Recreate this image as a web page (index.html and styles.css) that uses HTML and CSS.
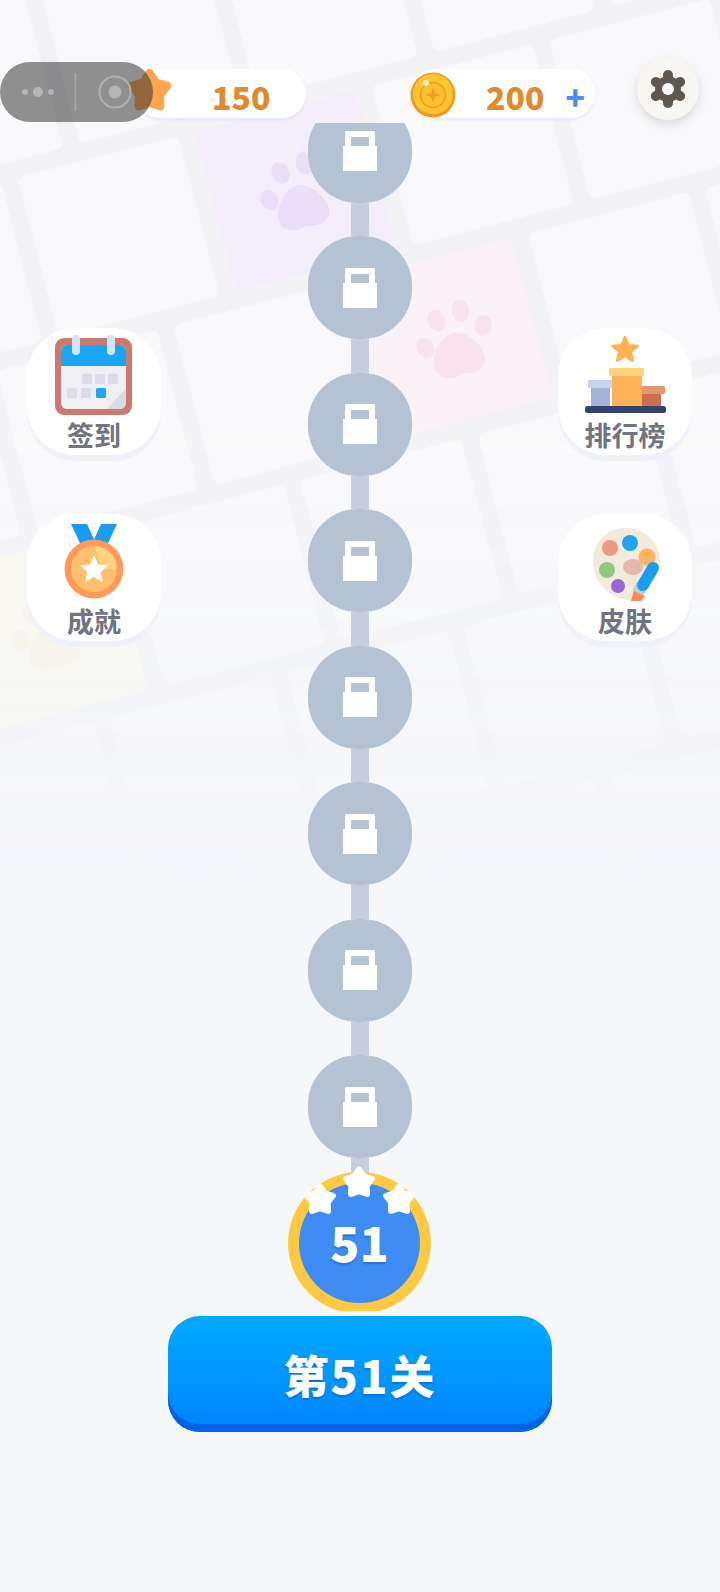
FILE: index.html
```html
<html>
<head>
<title>第51关</title>
<link rel="stylesheet" href="styles.css">
</head>
<body>
<svg class="defs" width="0" height="0">
  <symbol id="star" viewBox="-12 -12 24 24">
    <polygon points="0,-9 3.2,-4.4 8.6,-2.8 5.2,1.700 5.300,7.300 0,5.500 -5.300,7.300 -5.200,1.700 -8.600,-2.800 -3.200,-4.400" stroke-width="4" stroke-linejoin="round"/>
  </symbol>
  <symbol id="paw" viewBox="0 0 80 80">
    <ellipse cx="11" cy="39" rx="8.5" ry="10.500" transform="rotate(-15 11 39)"/>
    <ellipse cx="28" cy="16" rx="8.5" ry="11" transform="rotate(-8 28 16)"/>
    <ellipse cx="53" cy="13" rx="8.5" ry="11" transform="rotate(6 53 13)"/>
    <ellipse cx="71" cy="32" rx="8.5" ry="10.500" transform="rotate(18 71 32)"/>
    <path d="M40 32c12 0 25 15 25 29 0 12-14 16-25 11-11 5-25 1-25-11 0-14 13-29 25-29z"/>
  </symbol>
</svg>

<div class="page">
  <div class="bg">
    <div class="tiles">
      <div class="row row0"><i></i><i></i><i></i><i></i><i></i><i></i></div>
      <div class="row row1"><i></i><i></i><i class="purple"><svg><use href="#paw"/></svg></i><i></i><i></i><i></i></div>
      <div class="row row2"><i></i><i></i><i></i><i class="pink"><svg><use href="#paw"/></svg></i><i></i><i></i></div>
      <div class="row row3"><i></i><i class="yellow"><svg><use href="#paw"/></svg></i><i></i><i></i><i></i><i></i></div>
      <div class="row row4"><i></i><i></i><i></i><i></i><i></i><i></i></div>
      <div class="row row5"><i></i><i></i><i></i><i></i><i></i><i></i></div>
    </div>
  </div>

  <div class="topbar">
    <div class="stat stat-star">
      <svg class="stat-icon star-icon"><use href="#star" fill="#ffa54f" stroke="#ffa54f"/></svg>
      <span class="num">150</span>
    </div>
    <div class="stat stat-coin">
      <svg class="stat-icon coin-icon" viewBox="0 0 46 46">
        <circle cx="23" cy="23" r="22.5" fill="#ee9a1e"/>
        <circle cx="23" cy="22" r="20" fill="#ffc531"/>
        <circle cx="23" cy="23" r="12.5" fill="#fcc02f" stroke="#ec9f22" stroke-width="1.5"/>
        <path d="M23 15.500l2 5.500 5.500 2-5.500 2-2 5.500-2-5.500-5.500-2 5.500-2z" fill="#ec9f22"/>
        <circle cx="16" cy="11" r="3" fill="#fff2c4"/>
      </svg>
      <span class="num">200</span>
      <span class="plus">+</span>
    </div>
    <div class="gear">
      <svg viewBox="0 0 38 38" width="38" height="38">
        <g stroke="#5e5850" stroke-width="10" stroke-linecap="round">
          <line x1="19" y1="5" x2="19" y2="33"/>
          <line x1="19" y1="5" x2="19" y2="33" transform="rotate(60 19 19)"/>
          <line x1="19" y1="5" x2="19" y2="33" transform="rotate(120 19 19)"/>
        </g>
        <circle cx="19" cy="19" r="13" fill="#5e5850"/>
        <circle cx="19" cy="19" r="6" fill="#f8f7f4"/>
      </svg>
    </div>
  </div>

  <div class="capsule">
    <svg viewBox="0 0 153 60" width="153" height="60">
      <g fill="#b4b4b4">
        <circle cx="25" cy="30" r="3"/>
        <circle cx="38" cy="30" r="5"/>
        <circle cx="51" cy="30" r="3"/>
        <circle cx="115" cy="30" r="6.500"/>
      </g>
      <line x1="75.500" y1="11" x2="75.500" y2="49" stroke="#a8a8a8" stroke-width="1.500"/>
      <circle cx="115" cy="30" r="15.500" fill="none" stroke="#b0b0b0" stroke-width="2"/>
    </svg>
  </div>

  <div class="map">
    <div class="side">
      <div class="card">
        <svg class="card-icon" viewBox="0 0 80 82">
          <rect x="1" y="3" width="77" height="77" rx="9" fill="#cc7a6f"/>
          <rect x="7" y="10" width="65" height="64" rx="6" fill="#f0f0f4"/>
          <path d="M7 31V16a6 6 0 0 1 6-6h53a6 6 0 0 1 6 6v15z" fill="#18a6f5"/>
          <path d="M72 53v15a6 6 0 0 1-6 6H53z" fill="#d9dce3"/>
          <g fill="#dcdce8">
            <rect x="28" y="39" width="10" height="10" rx="1.500"/>
            <rect x="41" y="39" width="10" height="10" rx="1.500"/>
            <rect x="54" y="39" width="10" height="10" rx="1.500"/>
            <rect x="13" y="53" width="10" height="10" rx="1.500"/>
            <rect x="27" y="53" width="10" height="10" rx="1.500"/>
          </g>
          <rect x="42" y="53" width="10" height="10" rx="1.500" fill="#18a6f5"/>
          <g fill="none" stroke="#d4e3f8" stroke-width="8" stroke-linecap="round">
            <line x1="22" y1="4" x2="22" y2="16"/>
            <line x1="57" y1="4" x2="57" y2="16"/>
          </g>
        </svg>
        <span class="label">签到</span>
      </div>
      <div class="card">
        <svg class="card-icon" viewBox="0 0 80 82">
          <path d="M17 3h16l10 22-12 8z" fill="#1a9cf0"/>
          <path d="M63 3H47L37 25l12 8z" fill="#1a9cf0"/>
          <circle cx="40" cy="48" r="29.500" fill="#ff9a5b"/>
          <circle cx="40" cy="48" r="23" fill="#ffbf6f"/>
          <path d="M40 25a23 23 0 0 1 23 23H48z" fill="#ffd27f"/>
          <polygon points="40,35 43.900,44 53.300,44.700 46.200,50.900 48.200,60.300 40,55.400 31.800,60.300 33.800,50.900 26.700,44.700 36.100,44" fill="#fff" stroke="#fff" stroke-width="1" stroke-linejoin="round"/>
        </svg>
        <span class="label">成就</span>
      </div>
    </div>

    <div class="chain">
      <div class="node"><span class="lock"></span></div>
      <div class="link"></div>
      <div class="node"><span class="lock"></span></div>
      <div class="link"></div>
      <div class="node"><span class="lock"></span></div>
      <div class="link"></div>
      <div class="node"><span class="lock"></span></div>
      <div class="link"></div>
      <div class="node"><span class="lock"></span></div>
      <div class="link"></div>
      <div class="node"><span class="lock"></span></div>
      <div class="link"></div>
      <div class="node"><span class="lock"></span></div>
      <div class="link"></div>
      <div class="node"><span class="lock"></span></div>
      <div class="link link-last"></div>
      <div class="level">
        <span class="level-num">51</span>
        <svg class="level-star s1"><use href="#star" fill="#fff" stroke="#fff"/></svg>
        <svg class="level-star s2"><use href="#star" fill="#fff" stroke="#fff"/></svg>
        <svg class="level-star s3"><use href="#star" fill="#fff" stroke="#fff"/></svg>
      </div>
    </div>

    <div class="side">
      <div class="card">
        <svg class="card-icon" viewBox="0 0 84 82">
          <polygon points="42,2 45.500,10.300 54.500,11 47.700,16.800 49.800,25.600 42,21 34.200,25.600 36.300,16.800 29.500,11 38.500,10.300" fill="#ffb24f" stroke="#ffb24f" stroke-width="2.500" stroke-linejoin="round"/>
          <rect x="8" y="53" width="19" height="18" fill="#a5b1d6"/>
          <rect x="5" y="45" width="24" height="8" rx="1.500" fill="#c5d3ef"/>
          <rect x="58" y="59" width="20" height="12" fill="#cc6f4c"/>
          <rect x="58" y="51" width="24" height="8" rx="1.500" fill="#e59870"/>
          <rect x="29" y="41" width="30" height="30" fill="#ffb25a"/>
          <rect x="26" y="33" width="35" height="8" rx="1.500" fill="#ffd27a"/>
          <rect x="2" y="71" width="81" height="7" rx="2.500" fill="#33436b"/>
        </svg>
        <span class="label">排行榜</span>
      </div>
      <div class="card">
        <svg class="card-icon" viewBox="0 0 80 82">
          <path d="M41 7c19 0 34 14 34 33 0 9-5 13-10 18-6 6-8 21-19 21C24 79 8 60 8 40 8 20 22 7 41 7z" fill="#f3eadc"/>
          <circle cx="25" cy="27" r="8" fill="#e89a82"/>
          <circle cx="45" cy="22" r="8" fill="#18a6f5"/>
          <circle cx="62" cy="36" r="8.500" fill="#ffb35e"/>
          <circle cx="22" cy="49" r="8" fill="#92c87e"/>
          <ellipse cx="48" cy="46" rx="10" ry="8" fill="#e6b8aa"/>
          <circle cx="33" cy="65" r="7" fill="#9268d6"/>
          <path d="M46 80l3-11 11 6-4 5z" fill="#ff8a57"/>
          <line x1="57" y1="64" x2="53" y2="72" stroke="#c2cbd4" stroke-width="12"/>
          <line x1="68" y1="47" x2="58" y2="64" stroke="#1a9cf0" stroke-width="12" stroke-linecap="round"/>
        </svg>
        <span class="label">皮肤</span>
      </div>
    </div>
  </div>

  <div class="start">第51关</div>
</div>
</body>
</html>
```

FILE: styles.css
```css
body {
    margin: 0;
    background: #f6f7fb;
    font-family: "Noto Sans CJK SC", "Noto Sans", sans-serif;
}
.defs {
    display: block;
    height: 0;
}
.page {
    position: relative;
    width: 720px;
    height: 1592px;
    overflow: hidden;
}

/* tilted tile floor behind everything */
.bg {
    position: absolute;
    left: 0;
    top: 0;
    width: 720px;
    height: 1000px;
    overflow: hidden;
    background: #f3f3f6;
    -webkit-mask-image: linear-gradient(#000 40%, transparent 90%);
    mask-image: linear-gradient(#000 40%, transparent 90%);
}
.tiles {
    width: 1200px;
    height: 1300px;
    transform-origin: 0 0;
    transform: rotate(-14.5deg);
}
.row {
    display: flex;
    gap: 17px;
    margin-bottom: 17px;
}
.row:first-child {
    margin-top: -6px;
}
.row i {
    display: flex;
    flex: none;
    align-items: center;
    justify-content: center;
    width: 166px;
    height: 165px;
    border-radius: 6px;
    background: #f9f9fb;
}
.row i svg {
    width: 82px;
    height: 82px;
    margin: 6px 0 0 4px;
}
.row0 { margin-left: -143px; }
.row1 { margin-left: -212px; }
.row2 { margin-left: -281px; }
.row3 { margin-left: -380px; }
.row4 { margin-left: -258px; }
.row5 { margin-left: -336px; }
.row i.purple { background: #f4eefb; fill: #e9e0f8; }
.row i.pink { background: #fbf2f7; fill: #f8e4ee; }
.row i.yellow { background: #fbf9ec; fill: #f8f3de; }

/* top bar */
.topbar {
    position: relative;
    display: flex;
    align-items: flex-start;
    height: 62px;
    padding: 58px 0 0 135px;
}
.stat {
    display: flex;
    align-items: center;
    height: 49px;
    margin-top: 11px;
    border-radius: 25px;
    background: #fff;
    box-shadow: 0 2px 3px rgba(215, 225, 245, 0.6);
}
.stat-star {
    width: 171px;
}
.stat-coin {
    width: 185px;
    margin-left: 104px;
}
.star-icon {
    flex: none;
    width: 49px;
    height: 49px;
    margin: -5px 0 0 -10px;
}
.coin-icon {
    flex: none;
    width: 46px;
    height: 46px;
    margin-top: 3px;
}
.num {
    color: #e08a2d;
    font-size: 32px;
    font-weight: 900;
    line-height: 49px;
    margin-top: 6px;
}
.stat-star .num {
    margin-left: 38px;
}
.stat-coin .num {
    margin-left: 30px;
}
.plus {
    margin: 6px 0 0 21px;
    color: #4a8ef0;
    font-size: 32px;
    font-weight: 900;
    line-height: 49px;
}
.gear {
    display: flex;
    align-items: center;
    justify-content: center;
    width: 62px;
    height: 62px;
    margin-left: 42px;
    border-radius: 50%;
    background: #f8f7f4;
    box-shadow: 0 4px 8px rgba(190, 190, 195, 0.5);
}

/* system capsule, sits on top of the star */
.capsule {
    position: absolute;
    left: 0;
    top: 62px;
    width: 153px;
    height: 60px;
    border-radius: 30px;
    background: rgba(46, 46, 46, 0.52);
}
.capsule svg {
    display: block;
}

/* map */
.map {
    position: relative;
    display: grid;
    grid-template-columns: 134px 1fr 134px;
    height: 1188px;
    margin-top: 3px;
    padding: 0 28px 0 27px;
    overflow: hidden;
}
.side {
    display: flex;
    flex-direction: column;
    gap: 59px;
    padding-top: 205px;
}
.card {
    display: flex;
    flex-direction: column;
    align-items: center;
    box-sizing: border-box;
    height: 127px;
    padding-top: 7px;
    border-radius: 48px;
    background: #fff;
    box-shadow: 0 6px 0 #eff2fb;
}
.card-icon {
    display: block;
    flex: none;
    height: 82px;
    width: 84px;
}
.label {
    color: #6f7480;
    font-size: 27px;
    font-weight: 700;
    line-height: 36px;
}
.chain {
    display: flex;
    flex-direction: column;
    align-items: center;
    justify-content: flex-end;
    height: 1188px;
}
.node {
    display: flex;
    flex: none;
    align-items: center;
    justify-content: center;
    width: 104px;
    height: 103px;
    border-radius: 48%;
    background: #b5c2d3;
}
.link {
    flex: none;
    width: 18px;
    height: 33.500px;
    background: #c3cfdf;
}
.link-last {
    height: 20px;
    margin-bottom: -6px;
}
.lock {
    display: flex;
    flex-direction: column;
    align-items: center;
}
.lock::before {
    content: "";
    box-sizing: border-box;
    width: 30px;
    height: 15px;
    border: 6.500px solid #fff;
    border-bottom: 0;
    border-radius: 2px 2px 0 0;
}
.lock::after {
    content: "";
    width: 34px;
    height: 25px;
    background: #fff;
}
.level {
    position: relative;
    display: flex;
    flex: none;
    align-items: center;
    justify-content: center;
    box-sizing: border-box;
    width: 143px;
    height: 142px;
    margin-bottom: -3px;
    border: 11px solid #ffc944;
    border-radius: 50%;
    background: #3f8cf5;
}
.level-num {
    margin-top: -4px;
    color: #fff;
    font-size: 48px;
    font-weight: 900;
    line-height: 1;
    text-shadow: 0 2px 2px rgba(20, 60, 140, 0.35);
}
.level-star {
    position: absolute;
    width: 36px;
    height: 36px;
}
.level-star.s1 { left: 3px; top: -1px; }
.level-star.s2 { left: 42px; top: -18px; }
.level-star.s3 { left: 82px; top: -1px; }

/* start button */
.start {
    display: flex;
    align-items: center;
    justify-content: center;
    box-sizing: border-box;
    width: 384px;
    height: 116px;
    margin: 5px 0 0 168px;
    border-radius: 32px;
    background: linear-gradient(#00aaff, #0084ff);
    box-shadow: inset 0 -8px 0 #0062e4;
    color: #fff;
    font-size: 45px;
    font-weight: 900;
    letter-spacing: 2px;
    text-shadow: 0 2px 2px rgba(0, 50, 130, 0.3);
}
```
